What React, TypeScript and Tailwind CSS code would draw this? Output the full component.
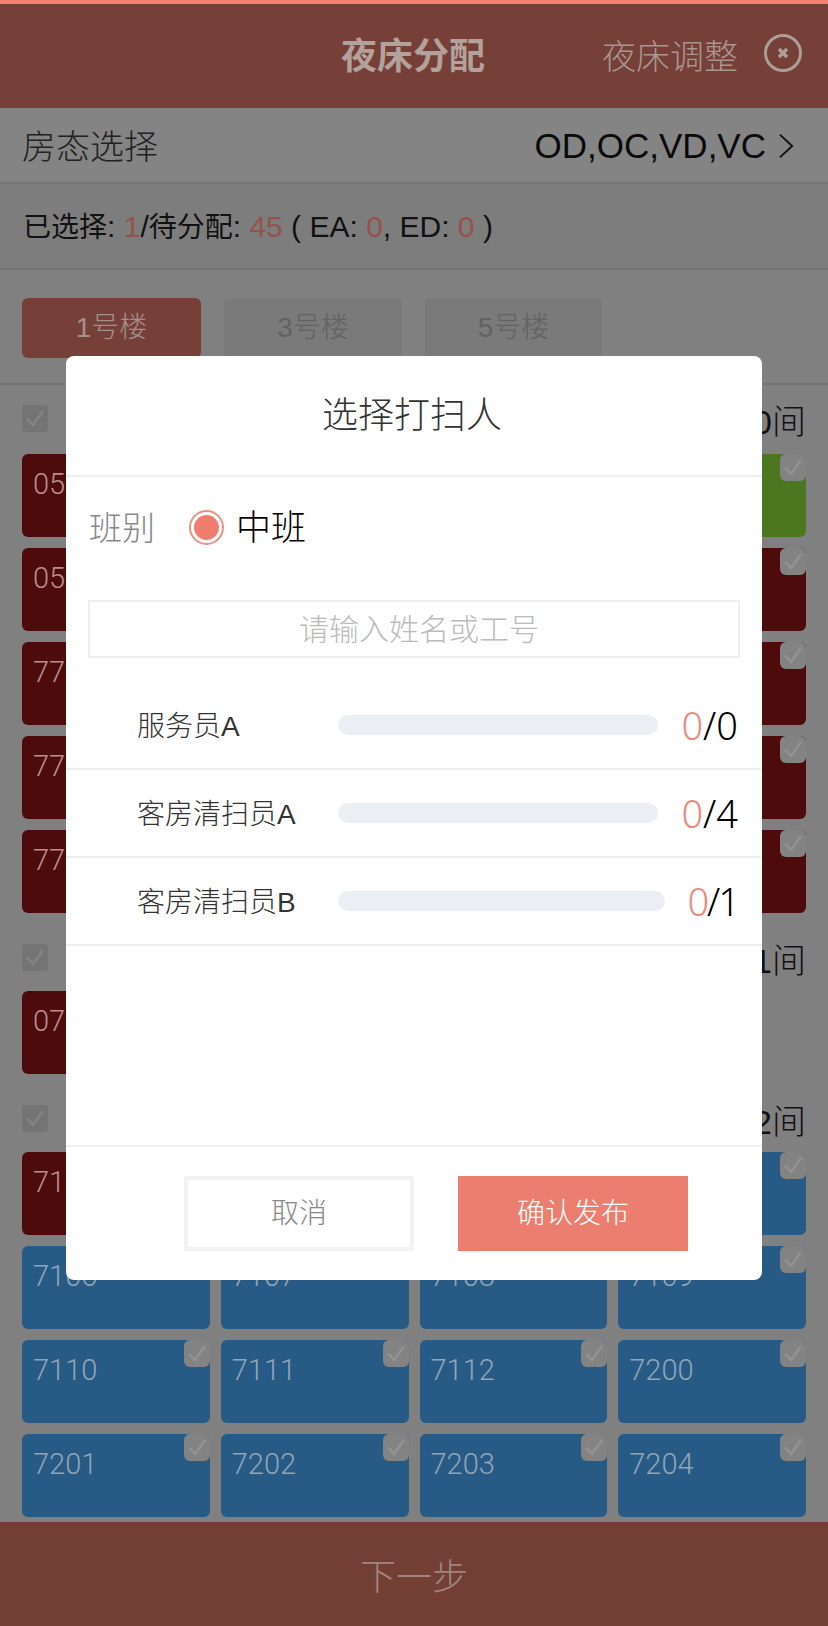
const red = "bg-[#4d0b0b] text-[#b98f8b]";
const blue = "bg-[#275a85] text-[#8fa5b8]";
const green = "bg-[#4c7620] text-[#a5b58f]";

type Room = { no: string; color: string };

const groupA: Room[] = [
	{ no: "0501", color: red },
	{ no: "0502", color: red },
	{ no: "0503", color: red },
	{ no: "0504", color: green },
	{ no: "0505", color: red },
	{ no: "0506", color: red },
	{ no: "0507", color: red },
	{ no: "0508", color: red },
	{ no: "7771", color: red },
	{ no: "7772", color: red },
	{ no: "7773", color: red },
	{ no: "7775", color: red },
	{ no: "7780", color: red },
	{ no: "7781", color: red },
	{ no: "7782", color: red },
	{ no: "7783", color: red },
	{ no: "7785", color: red },
	{ no: "7786", color: red },
	{ no: "7787", color: red },
	{ no: "7788", color: red },
];

const groupB: Room[] = [{ no: "0701", color: red }];

const groupC: Room[] = [
	{ no: "7102", color: red },
	...["7103", "7104", "7105", "7106", "7107", "7108", "7109", "7110", "7111", "7112", "7200", "7201", "7202", "7203", "7204"].map((no) => ({
		no,
		color: blue,
	})),
];

function Check({ className }: { className: string }) {
	return (
		<svg viewBox="0 0 26 27" className={className} fill="none" stroke="currentColor" strokeWidth="2.4">
			<path d="M5 13.5l6 6.5L21 6" />
		</svg>
	);
}

function RoomCard({ room }: { room: Room }) {
	return (
		<div className={`relative h-[83px] rounded-[6px] pl-[11px] pt-[12px] ${room.color}`}>
			<span className="block font-['Roboto',sans-serif] text-[29px] leading-[36px] font-light">{room.no}</span>
			<span className="absolute top-0 right-0 flex h-[27px] w-[26px] items-center justify-center rounded-[6px] bg-[#838383] text-[#939393]">
				<Check className="h-[27px] w-[26px]" />
			</span>
		</div>
	);
}

function Group({ count, rooms, first }: { count: string; rooms: Room[]; first?: boolean }) {
	return (
		<section className={first ? "pt-[20px]" : "pt-[31px]"}>
			<div className={`flex h-[27px] items-center justify-between ${first ? "mb-[22px]" : "mb-[20px]"}`}>
				<span className="flex h-[27px] w-[26px] items-center justify-center rounded-[3px] bg-[#747474] text-[#848484]">
					<Check className="h-[27px] w-[26px]" />
				</span>
				<span className="translate-y-[3px] text-[34px] leading-[36px] font-light text-[#111]">{count}</span>
			</div>
			<div className="grid grid-cols-4 gap-x-[11px] gap-y-[11px]">
				{rooms.map((room) => (
					<RoomCard key={room.no} room={room} />
				))}
			</div>
		</section>
	);
}

function StaffRow({ name, done, total, barClass, countClass }: { name: string; done: string; total: string; barClass: string; countClass?: string }) {
	return (
		<div className="flex h-[88px] items-center border-b-2 border-[#eeeeee] pr-[24px] pl-[71px]">
			<span className="w-[201px] shrink-0 pt-[4px] text-[28px] leading-[36px] font-light text-[#333]">{name}</span>
			<div className={`h-[20px] rounded-full bg-[#ebeef2] ${barClass}`} />
			<span className={`ml-auto font-['Noto_Sans',sans-serif] text-[38px] leading-[44px] font-light text-black ${countClass ?? ""}`}>
				<span className="text-[#e98a7e]">{done}</span>/{total}
			</span>
		</div>
	);
}

export default function App() {
	return (
		<div className="relative h-[1626px] w-[828px] overflow-hidden bg-[#808080] font-['Liberation_Sans','Noto_Sans_CJK_SC',sans-serif] text-[#111]">
			<div className="h-[4px] bg-[#f27f71]" />
			<header className="relative flex h-[104px] items-center justify-center bg-[#763f37]">
				<h1 className="pt-[2px] pr-[2px] text-[36px] font-bold text-[#b3a19c]">夜床分配</h1>
				<div className="absolute top-[33px] right-[26px] flex items-center gap-[26px]">
					<span className="text-[34px] leading-[40px] font-light text-[#a8968f]">夜床调整</span>
					<svg viewBox="0 0 38 38" className="h-[38px] w-[38px] -translate-y-[4px] text-[#ad9d98]" fill="none" stroke="currentColor">
						<circle cx="19" cy="19" r="17.5" strokeWidth="3" />
						<path d="M15 15l8 8M23 15l-8 8" strokeWidth="3.4" />
					</svg>
				</div>
			</header>
			<div className="flex h-[76px] items-center justify-between border-b-2 border-[#757575] bg-[#848484] pr-[33px] pl-[22px]">
				<span className="pt-[5px] text-[34px] font-light text-[#222]">房态选择</span>
				<div className="flex items-center gap-[12px] pt-[2px]">
					<span className="text-[35px] text-[#0a0a0a]">OD,OC,VD,VC</span>
					<svg viewBox="0 0 18 28" className="h-[28px] w-[17px] text-[#111]" fill="none" stroke="currentColor" strokeWidth="2">
						<path d="M2 2l13 12L2 26" />
					</svg>
				</div>
			</div>
			<div className="flex h-[86px] items-center border-b-2 border-[#757575] bg-[#7d7d7d] pl-[23px] text-[30px] text-[#111]">
				<span>
					<span className="text-[28px]">已选择</span>: <span className="text-[#96524a]">1</span>/<span className="text-[28px]">待分配</span>: <span className="text-[#96524a]">45</span> ( EA: <span className="text-[#96524a]">0</span>, ED:{" "}
					<span className="text-[#96524a]">0</span> )
				</span>
			</div>
			<div className="flex h-[115px] items-start gap-[23px] border-b-2 border-[#757575] px-[22px] pt-[28px]">
				<button className="flex h-[60px] w-[179px] items-center justify-center rounded-[6px] bg-[#763f37] text-[28px] font-light text-[#a68f8a]">1号楼</button>
				<button className="flex h-[60px] w-[178px] items-center justify-center rounded-[6px] bg-[#7a7a7a] text-[28px] font-light text-[#626262]">3号楼</button>
				<button className="flex h-[60px] w-[177px] items-center justify-center rounded-[6px] bg-[#7a7a7a] text-[28px] font-light text-[#626262]">5号楼</button>
			</div>
			<main className="px-[22px]">
				<Group first count="共20间" rooms={groupA} />
				<Group count="共1间" rooms={groupB} />
				<Group count="共22间" rooms={groupC} />
			</main>

			<div className="absolute right-0 bottom-0 left-0 flex h-[104px] items-center justify-center bg-[#733f35] pt-[8px] text-[36px] font-light text-[#a0857e]">下一步</div>

			<div className="absolute top-[356px] left-[66px] flex h-[924px] w-[696px] flex-col rounded-[8px] bg-white">
				<div className="flex h-[121px] items-center justify-center border-b-2 border-[#eeeeee] pr-[4px] text-[36px] font-light text-[#333]">选择打扫人</div>
				<div className="flex h-[103px] items-center pl-[23px]">
					<span className="w-[100px] text-[33px] font-light text-[#888]">班别</span>
					<span className="-mt-[3px] flex h-[35px] w-[35px] items-center justify-center rounded-full border-2 border-[#ee8f83]">
						<span className="h-[25px] w-[25px] rounded-full bg-[#ef7d6f]" />
					</span>
					<span className="ml-[12px] text-[35px] font-light text-black">中班</span>
				</div>
				<div className="mx-[22px] mt-[20px] flex h-[58px] items-center justify-center border-2 border-[#eeeeee] pl-[10px] text-[30px] font-light text-[#bbbbbb]">请输入姓名或工号</div>
				<div className="mt-[24px]">
					<StaffRow name="服务员A" done="0" total="0" barClass="w-[320px]" />
					<StaffRow name="客房清扫员A" done="0" total="4" barClass="w-[320px]" />
					<StaffRow name="客房清扫员B" done="0" total="1" barClass="w-[327px]" countClass="tracking-[-2px]" />
				</div>
				<div className="mt-auto flex h-[135px] gap-[44px] border-t-2 border-[#eeeeee] pt-[29px] pl-[118px]">
					<button className="flex h-[75px] w-[230px] items-center justify-center border-[4px] border-[#f2f2f2] text-[28px] font-light text-[#888]">取消</button>
					<button className="flex h-[75px] w-[230px] items-center justify-center bg-[#ec7e70] text-[28px] font-light text-white">确认发布</button>
				</div>
			</div>
		</div>
	);
}
